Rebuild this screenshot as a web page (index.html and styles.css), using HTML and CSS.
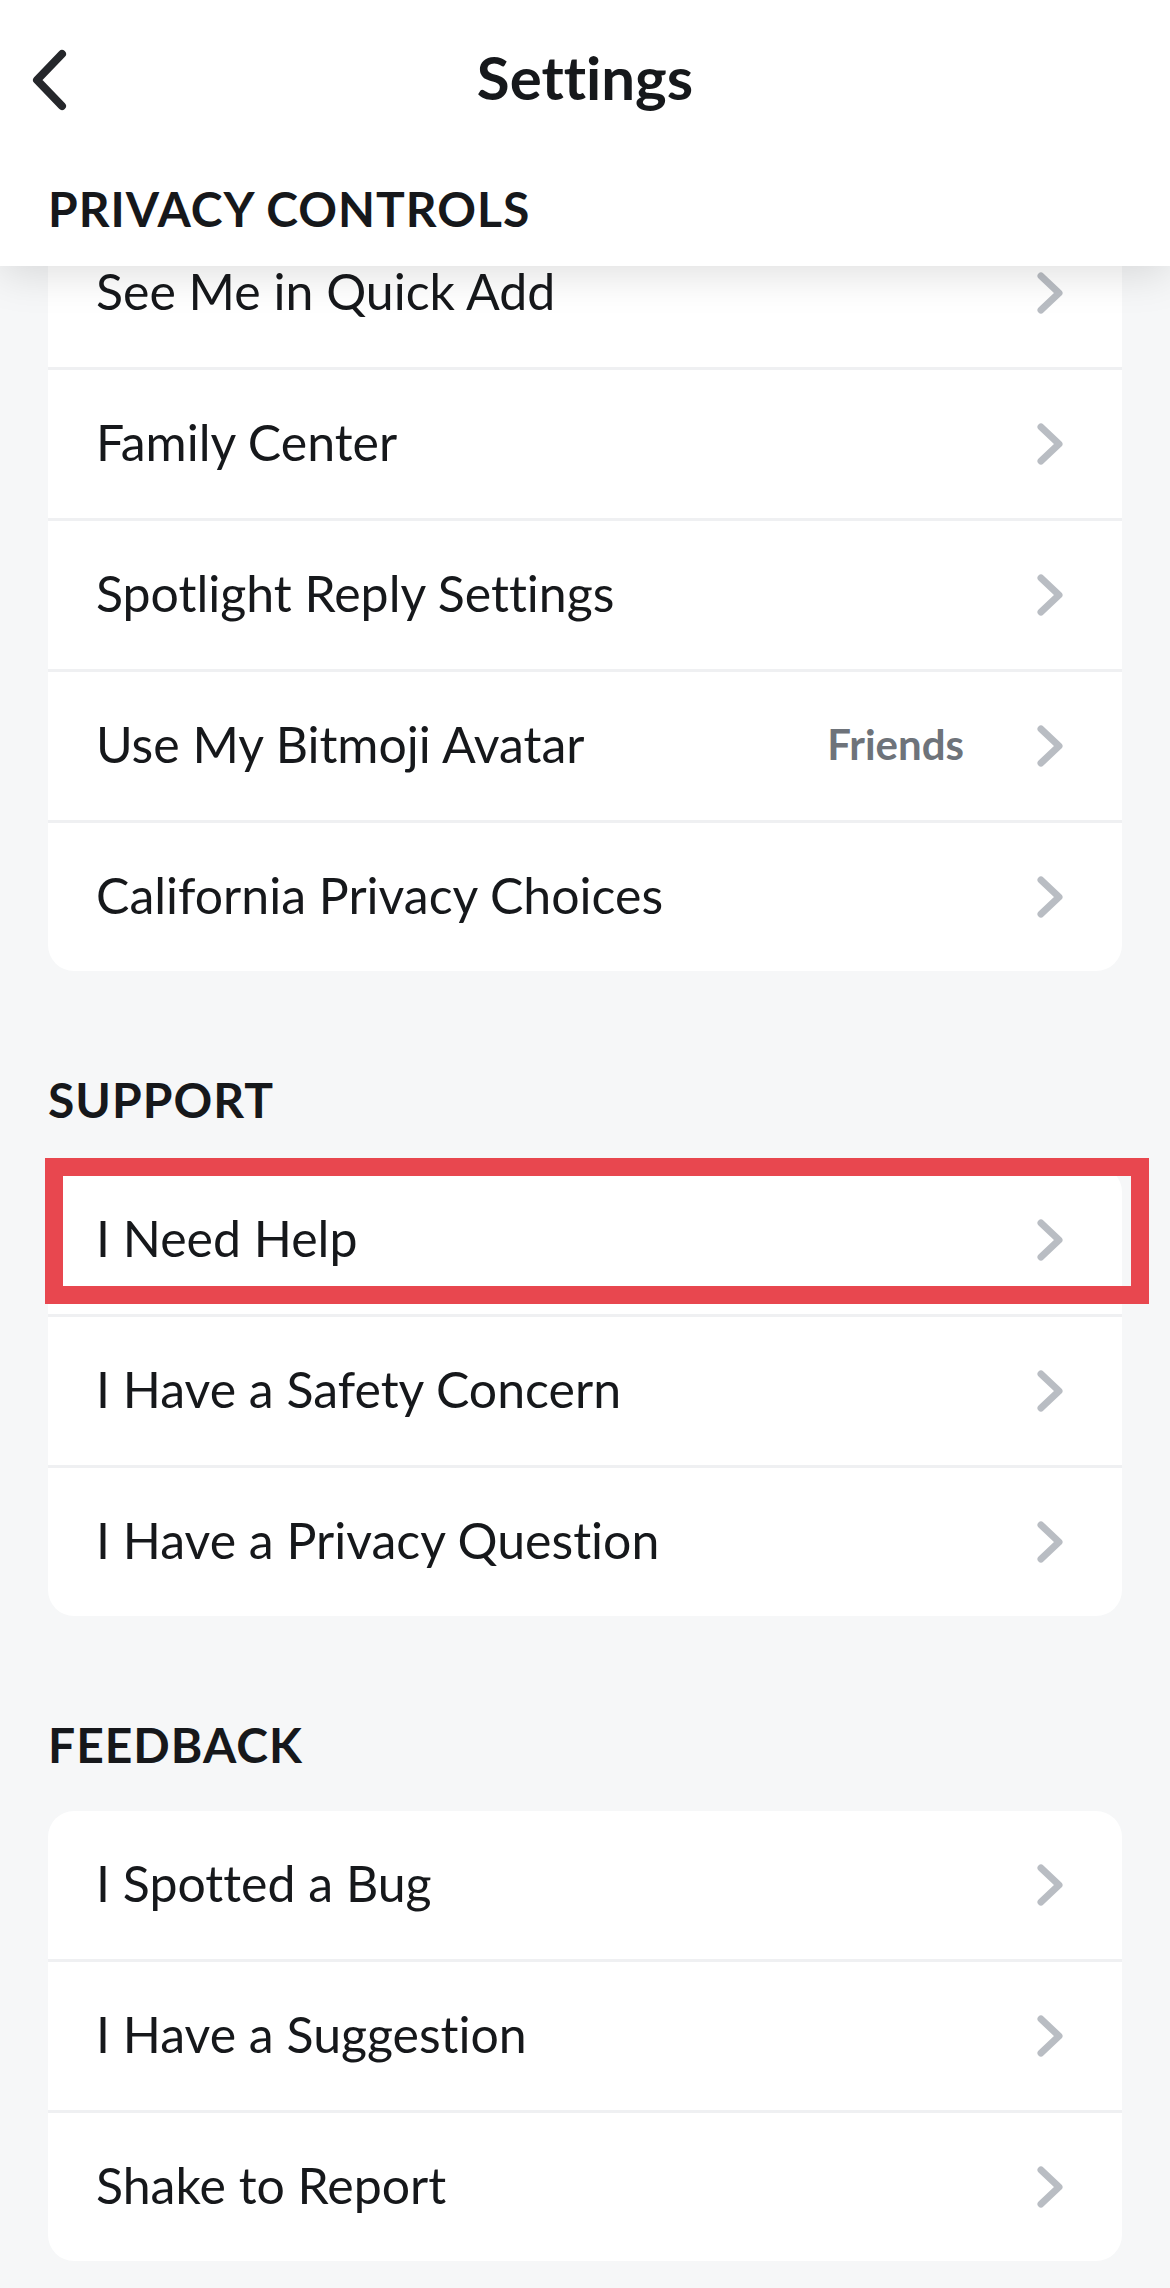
FILE: index.html
```html
<!DOCTYPE html>
<html lang="en">
<head>
  <meta charset="UTF-8">
  <meta name="viewport" content="width=device-width, initial-scale=1.0">
  <title>Settings</title>
  <link rel="stylesheet" href="styles.css">
</head>
<body>
  <!-- Sticky header -->
  <header class="header">
    <div class="topbar">
      <button class="back" aria-label="Back">
        <svg width="36" height="62" viewBox="0 0 36 62"><path d="M30 5 L5 31 L30 57" fill="none" stroke="#25272b" stroke-width="8" stroke-linecap="round" stroke-linejoin="round"/></svg>
      </button>
      <h1>Settings</h1>
    </div>
    <h2 class="section-title">PRIVACY CONTROLS</h2>
  </header>

  <main class="content">
    <div class="card">
      <div class="row"><span class="label">See Me in Quick Add</span><svg class="chev" width="28" height="44" viewBox="0 0 28 44"><path d="M5 5 L23 22 L5 39" /></svg></div>
      <div class="row"><span class="label">Family Center</span><svg class="chev" width="28" height="44" viewBox="0 0 28 44"><path d="M5 5 L23 22 L5 39" /></svg></div>
      <div class="row"><span class="label">Spotlight Reply Settings</span><svg class="chev" width="28" height="44" viewBox="0 0 28 44"><path d="M5 5 L23 22 L5 39" /></svg></div>
      <div class="row"><span class="label">Use My Bitmoji Avatar</span><span class="value">Friends</span><svg class="chev" width="28" height="44" viewBox="0 0 28 44"><path d="M5 5 L23 22 L5 39" /></svg></div>
      <div class="row"><span class="label">California Privacy Choices</span><svg class="chev" width="28" height="44" viewBox="0 0 28 44"><path d="M5 5 L23 22 L5 39" /></svg></div>
    </div>

    <h2 class="section-title">SUPPORT</h2>
    <div class="card">
      <div class="row highlight"><span class="label">I Need Help</span><svg class="chev" width="28" height="44" viewBox="0 0 28 44"><path d="M5 5 L23 22 L5 39" /></svg></div>
      <div class="row"><span class="label">I Have a Safety Concern</span><svg class="chev" width="28" height="44" viewBox="0 0 28 44"><path d="M5 5 L23 22 L5 39" /></svg></div>
      <div class="row"><span class="label">I Have a Privacy Question</span><svg class="chev" width="28" height="44" viewBox="0 0 28 44"><path d="M5 5 L23 22 L5 39" /></svg></div>
    </div>

    <h2 class="section-title">FEEDBACK</h2>
    <div class="card">
      <div class="row"><span class="label">I Spotted a Bug</span><svg class="chev" width="28" height="44" viewBox="0 0 28 44"><path d="M5 5 L23 22 L5 39" /></svg></div>
      <div class="row"><span class="label">I Have a Suggestion</span><svg class="chev" width="28" height="44" viewBox="0 0 28 44"><path d="M5 5 L23 22 L5 39" /></svg></div>
      <div class="row"><span class="label">Shake to Report</span><svg class="chev" width="28" height="44" viewBox="0 0 28 44"><path d="M5 5 L23 22 L5 39" /></svg></div>
    </div>
  </main>
</body>
</html>
```

FILE: styles.css
```css
body {
  margin: 0;
  background-color: #f6f7f8;
  font-family: Lato, "Noto Sans", sans-serif;
  font-variant-ligatures: none;
  color: #16181b;
}

.header {
  position: absolute;
  top: 0;
  left: 0;
  right: 0;
  height: 266px;
  background: #fff;
  box-shadow: 0 8px 40px rgba(0, 0, 0, 0.13);
  z-index: 2;

  .section-title {
    margin: 20px 0 0;
  }
}

.topbar {
  position: relative;
  height: 160px;
  display: flex;
  align-items: center;
  justify-content: center;

  h1 {
    margin: 0 0 6px;
    font-size: 60px;
    font-weight: 700;
    line-height: 1;
  }

  .back {
    position: absolute;
    left: 32px;
    top: 49px;
    padding: 0;
    border: none;
    background: none;
    display: flex;
  }
}

.section-title {
  margin: 100px 0 37px;
  padding: 0 48px;
  font-size: 48px;
  line-height: 58px;
  font-weight: 700;
  letter-spacing: 1px;
}

.content {
  padding: 219px 48px 0;

  .section-title {
    padding: 0;
  }
}

.card {
  background: #fff;
  border-radius: 26px;
}

.row {
  position: relative;
  height: 148px;
  box-sizing: border-box;
  display: flex;
  align-items: center;
  padding: 0 58px 5px 48px;
  font-size: 50px;

  & + .row {
    height: 151px;
    border-top: 3px solid #eff0f2;
  }

  .label {
    flex: 1;
  }

  .value {
    margin-right: 72px;
    font-size: 42px;
    font-weight: 700;
    color: #6e737a;
  }

  .chev {
    margin-top: 5px;
  }

  .chev path {
    fill: none;
    stroke: #b9bdc3;
    stroke-width: 7;
    stroke-linecap: round;
    stroke-linejoin: round;
  }

  &.highlight::after {
    content: "";
    position: absolute;
    top: -8px;
    left: -3px;
    right: -27px;
    bottom: 10px;
    border: 18px solid #e8474f;
  }
}
```
